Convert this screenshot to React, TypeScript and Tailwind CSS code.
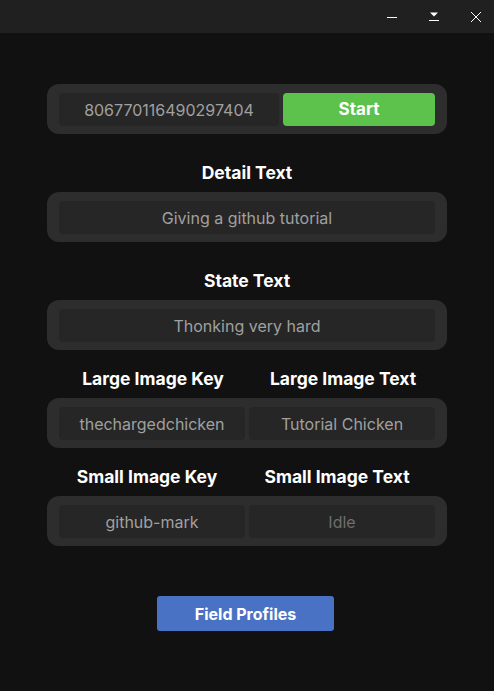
import React from 'react';

const font = { fontFamily: 'Inter, "Noto Sans", sans-serif' };

const Field: React.FC<{ value: string; dim?: boolean }> = ({ value, dim }) => (
  <div
    className={`flex-1 h-[33px] rounded-[4px] bg-[#262626] flex items-center justify-center text-[16px] ${
      dim ? 'text-[#6e6e6e]' : 'text-[#a0a0a0]'
    }`}
  >
    {value}
  </div>
);

const Frame: React.FC<{ children: React.ReactNode; className?: string }> = ({ children, className }) => (
  <div className={`w-[400px] h-[50px] rounded-[12px] bg-[#2d2d2d] flex gap-1 px-3 pt-[9px] pb-2 ${className ?? ''}`}>
    {children}
  </div>
);

const Label: React.FC<{ children: React.ReactNode }> = ({ children }) => (
  <div className="flex-1 h-6 flex items-center justify-center text-[17.5px] font-bold text-white whitespace-nowrap">
    {children}
  </div>
);

export default function App() {
  return (
    <div className="w-[494px] h-[691px] bg-[#111111] flex flex-col" style={font}>
      {/* title bar */}
      <div className="h-[33px] bg-[#202020] flex justify-end items-center overflow-hidden">
        <div className="w-[42px] h-full flex items-center justify-center">
          <div className="w-[10px] h-px bg-white mt-[1px]" />
        </div>
        <div className="w-[42px] h-full flex items-center justify-center">
          <svg width="12" height="12" viewBox="0 0 12 12">
            <path d="M2 1.5h8L6 5.5z" fill="white" />
            <path d="M1 9.5h10" stroke="white" strokeWidth="1" />
          </svg>
        </div>
        <div className="w-[42px] h-full flex items-center justify-center shrink-0 mr-[-3px]">
          <svg width="12" height="12" viewBox="0 0 12 12">
            <path d="M1 1l10 10M11 1L1 11" stroke="white" strokeWidth="1" />
          </svg>
        </div>
      </div>

      <div className="flex flex-col items-center">
        <Frame className="mt-[51px]">
          <div className="w-[220px] h-[33px] rounded-[4px] bg-[#262626] flex items-center justify-center text-[16px] text-[#a0a0a0]">
            806770116490297404
          </div>
          <button className="flex-1 h-[33px] rounded-[4px] bg-[#5cc24b] text-white text-[17px] font-bold">
            Start
          </button>
        </Frame>

        <div className="w-[400px] flex mt-[27px]">
          <Label>Detail Text</Label>
        </div>
        <Frame className="mt-[7px]">
          <Field value="Giving a github tutorial" />
        </Frame>

        <div className="w-[400px] flex mt-[27px]">
          <Label>State Text</Label>
        </div>
        <Frame className="mt-[7px]">
          <Field value="Thonking very hard" />
        </Frame>

        <div className="w-[400px] flex px-3 gap-1 mt-[17px] ml-[2px]">
          <Label>Large Image Key</Label>
          <Label>Large Image Text</Label>
        </div>
        <Frame className="mt-[7px]">
          <Field value="thechargedchicken" />
          <Field value="Tutorial Chicken" />
        </Frame>

        <div className="w-[400px] flex px-3 gap-1 mt-[17px] mr-[10px]">
          <Label>Small Image Key</Label>
          <Label>Small Image Text</Label>
        </div>
        <Frame className="mt-[7px]">
          <Field value="github-mark" />
          <Field value="Idle" dim />
        </Frame>

        <button className="mt-[50px] mr-[3px] w-[177px] h-[35px] rounded-[3px] bg-[#4a72c4] text-white text-[16px] font-bold">
          Field Profiles
        </button>
      </div>
    </div>
  );
}
